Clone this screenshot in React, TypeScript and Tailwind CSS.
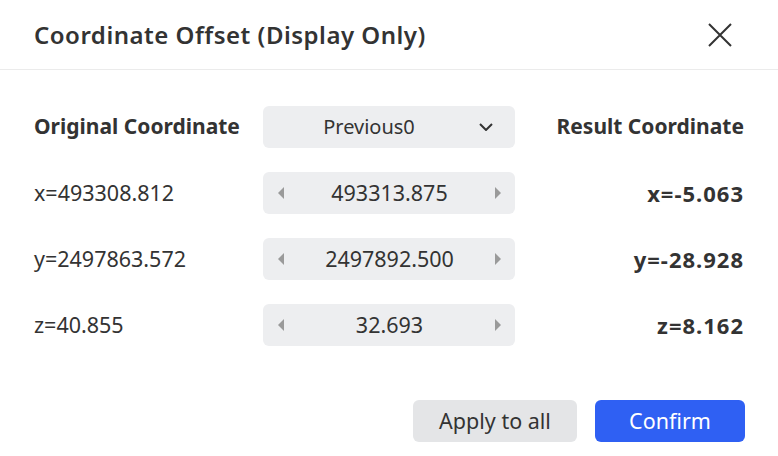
import React from "react";

const font = { fontFamily: '"Segoe UI", "Noto Sans", "Open Sans", sans-serif' };

function LeftTri() {
  return (
    <svg width="6" height="12" viewBox="0 0 6 12">
      <polygon points="6,0 6,12 0,6" fill="#9a9a9a" />
    </svg>
  );
}
function RightTri() {
  return (
    <svg width="6" height="12" viewBox="0 0 6 12">
      <polygon points="0,0 0,12 6,6" fill="#9a9a9a" />
    </svg>
  );
}

function Spinner({ value }: { value: string }) {
  return (
    <div className="h-[42px] rounded-md bg-[#edeef0] flex items-center justify-between pl-[15px] pr-[14px]">
      <LeftTri />
      <span className="text-[21.5px] text-[#333]">{value}</span>
      <RightTri />
    </div>
  );
}

export default function App() {
  const rows = [
    ["x=493308.812", "493313.875", "x=-5.063"],
    ["y=2497863.572", "2497892.500", "y=-28.928"],
    ["z=40.855", "32.693", "z=8.162"],
  ];
  return (
    <div className="w-[778px] h-[456px] bg-white text-[#333] flex flex-col" style={font}>
      <div className="h-[70px] border-b border-[#ebebeb] flex items-center justify-between pl-[34px] pr-[46px]">
        <span className="text-[24px] font-semibold tracking-[0.5px] text-[#333]">Coordinate Offset (Display Only)</span>
        <svg width="24" height="24" viewBox="0 0 24 24">
          <path d="M1 1 L23 23 M23 1 L1 23" stroke="#333" strokeWidth="2" fill="none" />
        </svg>
      </div>
      <div className="px-[34px] pt-[36px] grid grid-cols-[1fr_252px_1fr] gap-y-6 items-center">
        <div className="text-[21px] font-bold">Original Coordinate</div>
        <div className="h-[42px] rounded-md bg-[#edeef0] flex items-center justify-center relative pr-[40px]">
          <span className="text-[20px]">Previous0</span>
          <svg className="absolute right-[22px] top-[17px]" width="14" height="8" viewBox="0 0 14 8">
            <path d="M1 1 L7 7 L13 1" stroke="#333" strokeWidth="2" fill="none" />
          </svg>
        </div>
        <div className="text-[21px] font-bold text-right">Result Coordinate</div>
        {rows.map((r) => (
          <React.Fragment key={r[0]}>
            <div className="text-[21.5px]">{r[0]}</div>
            <Spinner value={r[1]} />
            <div className="text-[22px] font-bold tracking-[1px] text-right">{r[2]}</div>
          </React.Fragment>
        ))}
      </div>
      <div className="mt-[54px] px-[33px] flex justify-end gap-[18px]">
        <button className="w-[164px] h-[42px] rounded-md bg-[#e4e5e7] text-[21.5px] text-[#333]">Apply to all</button>
        <button className="w-[150px] h-[42px] rounded-md bg-[#2f60f3] text-[21.5px] text-white">Confirm</button>
      </div>
    </div>
  );
}
